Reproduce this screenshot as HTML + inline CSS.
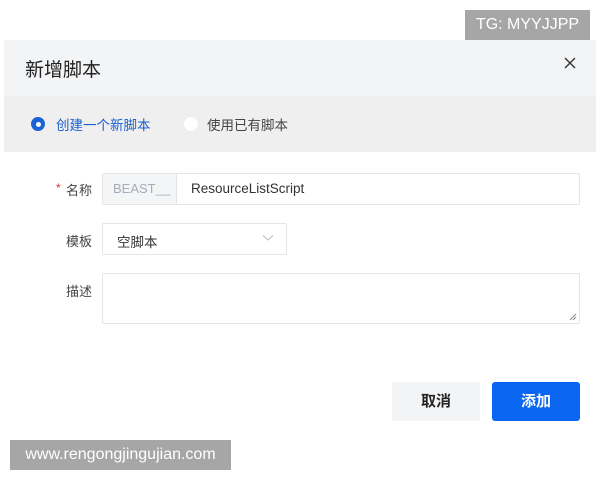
<!DOCTYPE html><html><head><meta charset="utf-8"><style>
body{margin:0;width:600px;height:480px;background:#fff;position:relative;font-family:"Liberation Sans","Noto Sans CJK SC",sans-serif;overflow:hidden}
.a{position:absolute}
.lbl{font-size:13px;color:#444;}
</style></head><body>
<div class="a" style="left:465px;top:10px;width:125px;height:30px;background:#a6a6a6;color:#fff;font-size:16px;line-height:30px;text-align:center">TG: MYYJJPP</div>
<div class="a" style="left:4px;top:40px;width:592px;height:56px;background:#f3f4f6"></div>
<div class="a" style="left:25px;top:55px;font-size:19px;color:#222">新增脚本</div>
<svg class="a" style="left:562px;top:55px" width="16" height="16"><path d="M3 3L13 13M13 3L3 13" stroke="#333" stroke-width="1.4"/></svg>
<div class="a" style="left:4px;top:96px;width:592px;height:56px;background:#efeff0"></div>
<div class="a" style="left:31px;top:117px;width:14px;height:14px;border-radius:50%;background:#1a63d6"></div>
<div class="a" style="left:35.5px;top:121.5px;width:5px;height:5px;border-radius:50%;background:#fff"></div>
<div class="a" style="left:56px;top:114px;font-size:13.5px;color:#1a5fcc">创建一个新脚本</div>
<div class="a" style="left:184px;top:117px;width:14px;height:14px;border-radius:50%;background:#fff"></div>
<div class="a" style="left:207px;top:114px;font-size:13.5px;color:#444">使用已有脚本</div>
<div class="a" style="left:56px;top:181px;font-size:12px;color:#d33">*</div>
<div class="a lbl" style="left:66px;top:180px">名称</div>
<div class="a" style="left:102px;top:173px;width:476px;height:30px;border:1px solid #e3e5e8;border-radius:2px"></div>
<div class="a" style="left:103px;top:174px;width:73px;height:30px;background:#f4f5f7;border-right:1px solid #e3e5e8"></div>
<div class="a" style="left:113px;top:181px;font-size:13px;color:#aab">BEAST__</div>
<div class="a" style="left:191px;top:181px;font-size:13.5px;color:#333">ResourceListScript</div>
<div class="a lbl" style="left:66px;top:231px">模板</div>
<div class="a" style="left:102px;top:223px;width:183px;height:30px;border:1px solid #e3e5e8;border-radius:2px"></div>
<div class="a" style="left:117px;top:231px;font-size:13.5px;color:#333">空脚本</div>
<svg class="a" style="left:262px;top:234px" width="12" height="8"><path d="M1 1.5L6 6L11 1.5" stroke="#bbb" fill="none"/></svg>
<div class="a lbl" style="left:66px;top:281px">描述</div>
<div class="a" style="left:102px;top:273px;width:476px;height:49px;border:1px solid #e3e5e8;border-radius:2px"></div>
<svg class="a" style="left:569px;top:313px" width="8" height="8"><path d="M1 7L7 1M4 7L7 4" stroke="#888"/></svg>
<div class="a" style="left:392px;top:382px;width:88px;height:39px;background:#f3f4f6;border-radius:3px;text-align:center;line-height:40px;font-size:15px;font-weight:bold;color:#222">取消</div>
<div class="a" style="left:492px;top:382px;width:88px;height:39px;background:#0a66f0;border-radius:3px;text-align:center;line-height:40px;font-size:15px;font-weight:bold;color:#fff">添加</div>
<div class="a" style="left:10px;top:440px;width:221px;height:30px;background:#a6a6a6;color:#fff;font-size:16px;line-height:30px;text-align:center">www.rengongjingujian.com</div>
</body></html>
